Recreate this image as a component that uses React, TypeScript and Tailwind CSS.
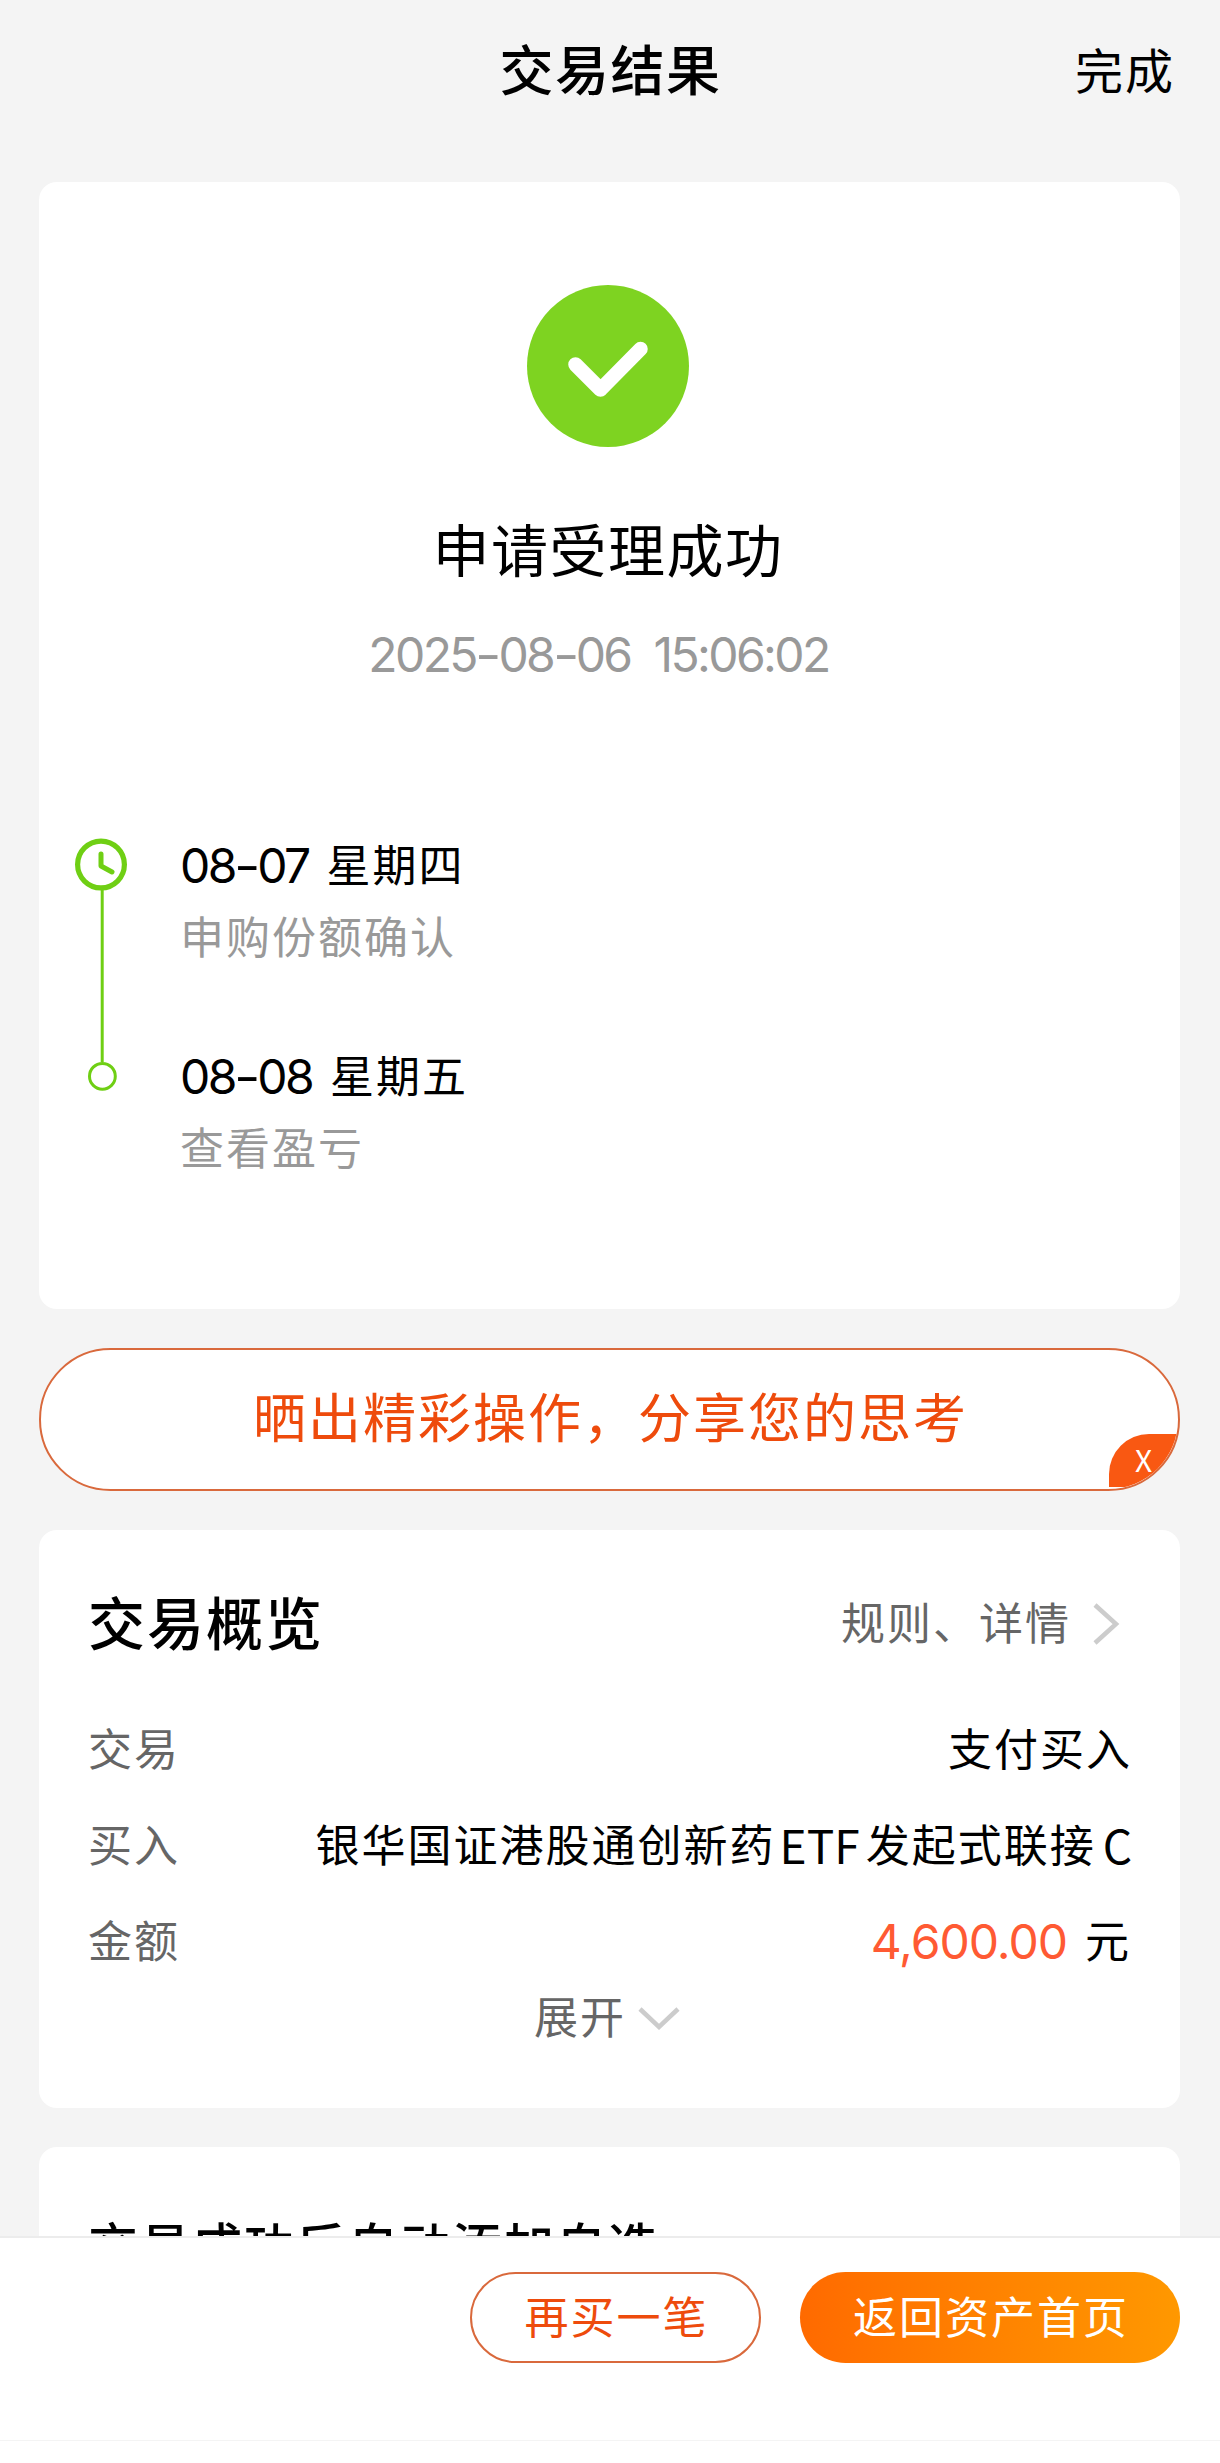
const rows = [
  { label: "交易", value: "支付买入" },
  { label: "买入", value: "银华国证港股通创新药ETF发起式联接C" },
]

function SuccessIcon() {
  return (
    <svg className="mr-[3px] h-[162px] w-[162px]" viewBox="0 0 162 162" fill="none">
      <circle cx="81" cy="81" r="81" fill="#7ed321" />
      <path d="M48.5 79.5 L73.5 104.5 L113.5 64" stroke="#fff" strokeWidth="14.5" strokeLinecap="round" strokeLinejoin="round" />
    </svg>
  )
}

function Timeline() {
  return (
    <svg className="h-[254px] w-[54px] shrink-0" viewBox="0 0 54 254" fill="none" stroke="#6fcf14">
      <circle cx="27" cy="26.5" r="23.4" strokeWidth="5.2" />
      <path d="M27 16 V28 L38 34" strokeWidth="5" strokeLinecap="round" strokeLinejoin="round" />
      <path d="M28.2 52 V224" strokeWidth="3" />
      <circle cx="28.4" cy="238.3" r="12.9" strokeWidth="3" />
    </svg>
  )
}

function Step({ date, day, note }: { date: string; day: string; note: string }) {
  return (
    <div className="h-[211px]">
      <p className="flex h-[72px] items-center">
        <Num value={date} />
        <span className="ml-[18px]">{day}</span>
      </p>
      <p className="flex h-[72px] items-center text-[#999]">{note}</p>
    </div>
  )
}

// digits are set tight, the dashes between them wide
function Num({ value }: { value: string }) {
  return (
    <span className="font-['Inter'] text-[48px] tracking-[-2.6px]">
      {value.split("-").map((part, i) => (
        <span key={i}>
          {i > 0 && <span className="mx-[1.5px] inline-block scale-x-120">-</span>}
          {part}
        </span>
      ))}
    </span>
  )
}

// latin runs inside a fund name
function FundName({ name }: { name: string }) {
  return (
    <>
      {name.split(/([A-Z]+)/).filter(Boolean).map((part, i) =>
        i % 2 ? (
          <span key={i} className="ml-[4px] pb-[5px] font-['Noto_Sans_CJK_SC'] text-[46px] tracking-[0px] last:ml-[7px]">
            {part}
          </span>
        ) : (
          <span key={i} className="[&:not(:first-child)]:ml-[6px]">{part}</span>
        )
      )}
    </>
  )
}

export default function App() {
  return (
    <div className="flex h-[2463px] w-[1220px] flex-col overflow-hidden bg-[#f4f4f4] font-['Inter','Noto_Sans_CJK_SC',sans-serif] text-[44px] leading-none tracking-[2px] text-black">
      <header className="grid h-[182px] shrink-0 grid-cols-[1fr_auto_1fr] pt-[36px] pr-[45px] pl-[46px]">
        <span />
        <h1 className="flex h-[72px] items-center text-[54px] font-medium tracking-[1.5px]">交易结果</h1>
        <button className="flex h-[72px] items-center justify-end text-[48px] tracking-[2px]">完成</button>
      </header>

      <main className="flex min-h-0 flex-1 flex-col gap-[39px] overflow-hidden pr-[40px] pl-[39px]">
        <section className="h-[1127px] shrink-0 rounded-[18px] bg-white">
          <div className="flex flex-col items-center pt-[103px]">
            <SuccessIcon />
            <h2 className="mt-[68px] mr-[3px] flex h-[72px] items-center text-[57px] tracking-[1.5px]">申请受理成功</h2>
            <p className="mt-[32px] mr-[22px] flex h-[72px] items-center gap-[23px] text-[#999]">
              <Num value="2025-08-06" />
              <Num value="15:06:02" />
            </p>
          </div>
          <div className="mt-[147px] flex gap-[50px] pl-[35px]">
            <Timeline />
            <div className="-mt-[8px] pl-[2px]">
              <Step date="08-07" day="星期四" note="申购份额确认" />
              <Step date="08-08" day="星期五" note="查看盈亏" />
            </div>
          </div>
        </section>

        <button className="relative flex h-[143px] shrink-0 items-center justify-center overflow-hidden rounded-full border-2 border-[#d9693c] bg-white pl-[2px] text-[53px] tracking-[2px] text-[#ee4b0c]">
          晒出精彩操作，分享您的思考
          <span className="absolute right-0 bottom-[2px] flex h-[53px] w-[69px] items-center rounded-tl-[40px] bg-[#f95812] pb-[3px] pl-[26px] font-['Noto_Sans_CJK_SC'] text-[30px] text-white">
            X
          </span>
        </button>

        <section className="h-[578px] shrink-0 rounded-[18px] bg-white pt-[58px] pr-[48px] pl-[49px]">
          <div className="flex h-[72px] items-center justify-between">
            <h3 className="text-[57px] font-medium tracking-[2px]">交易概览</h3>
            <button className="flex items-center pr-[11px] text-[#666]">
              规则、详情
              <svg className="ml-[22px] h-[42px] w-[28px]" viewBox="0 0 28 42" fill="none" stroke="#ccc" strokeWidth="4.5">
                <path d="M2 2 L23 21 L2 40" />
              </svg>
            </button>
          </div>
          <dl className="mt-[42px]">
            {rows.map((row) => (
              <div key={row.label} className="flex h-[96px] items-center justify-between">
                <dt className="text-[#666]">{row.label}</dt>
                <dd className="flex items-center">
                  <FundName name={row.value} />
                </dd>
              </div>
            ))}
            <div className="flex h-[96px] items-center justify-between">
              <dt className="text-[#666]">金额</dt>
              <dd className="flex items-center pr-[1px]">
                <span className="mr-[18px] text-[48px] tracking-[-1px] text-[#ff5a33]">4,600.00</span>元
              </dd>
            </div>
          </dl>
          <button className="mx-auto flex h-[56px] items-center pr-[6px] text-[#666]">
            展开
            <svg className="ml-[12px] h-[28px] w-[42px]" viewBox="0 0 42 28" fill="none" stroke="#ccc" strokeWidth="4.5">
              <path d="M2 5 L21 23 L40 5" />
            </svg>
          </button>
        </section>

        <section className="h-[200px] shrink-0 rounded-t-[18px] bg-white px-[49px] pt-[64px]">
          <h3 className="flex h-[72px] items-center text-[50px] font-medium tracking-[2px]">交易成功后自动添加自选</h3>
        </section>
      </main>

      <footer className="h-[227px] shrink-0 border-t-2 border-[#ececec] bg-white">
        <div className="flex h-[203px] justify-end gap-[39px] border-b border-[#f4f4f4] pt-[34px] pr-[40px]">
          <button className="flex h-[91px] w-[291px] items-center justify-center rounded-full border-2 border-[#d9693c] pl-[2px] text-[#ee4b0c]">再买一笔</button>
          <button className="flex h-[91px] w-[380px] items-center justify-center rounded-full bg-linear-to-r from-[#ff6a00] to-[#ff9800] pl-[2px] text-white">返回资产首页</button>
        </div>
      </footer>
    </div>
  )
}
